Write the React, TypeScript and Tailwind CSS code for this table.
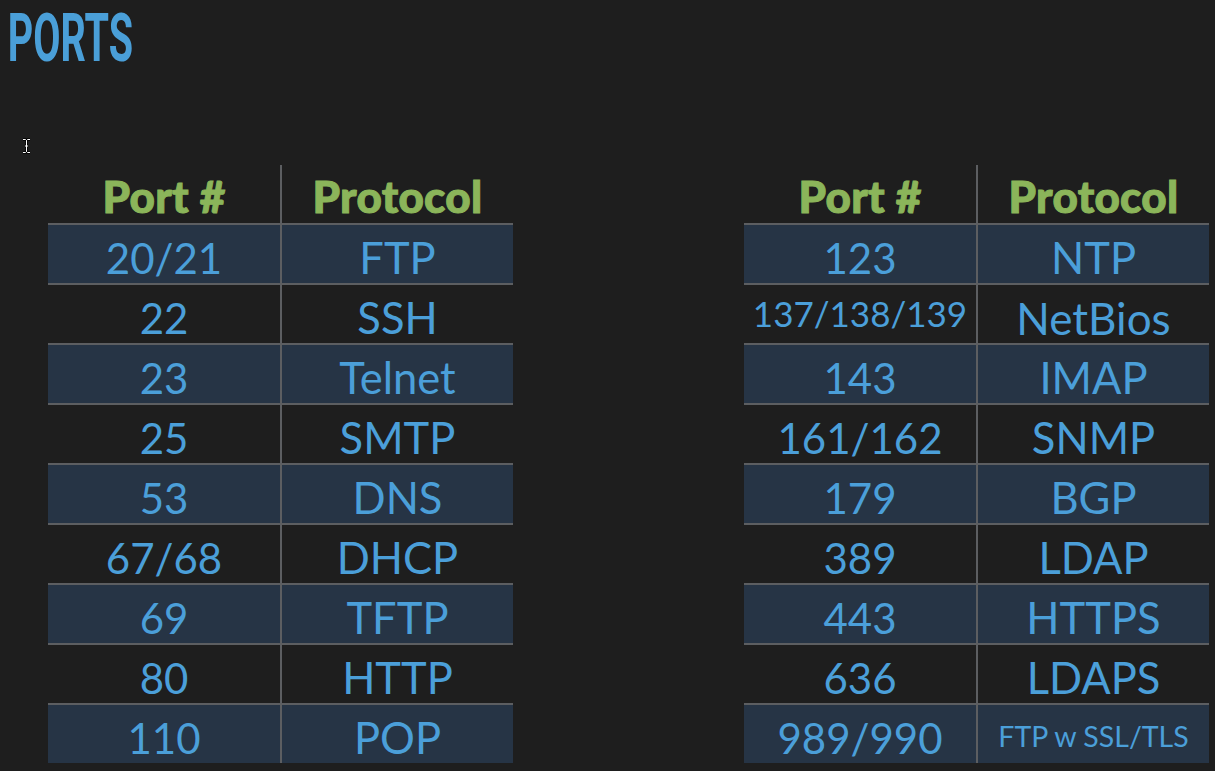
import React from "react"

const left = [
  ["20/21", "FTP"],
  ["22", "SSH"],
  ["23", "Telnet"],
  ["25", "SMTP"],
  ["53", "DNS"],
  ["67/68", "DHCP"],
  ["69", "TFTP"],
  ["80", "HTTP"],
  ["110", "POP"],
]

const right = [
  ["123", "NTP"],
  ["137/138/139", "NetBios"],
  ["143", "IMAP"],
  ["161/162", "SNMP"],
  ["179", "BGP"],
  ["389", "LDAP"],
  ["443", "HTTPS"],
  ["636", "LDAPS"],
  ["989/990", "FTP w SSL/TLS"],
]

function cellSize(text: string) {
  if (text === "137/138/139") return "text-[35px] -translate-y-[12px]"
  if (text === "FTP w SSL/TLS") return "text-[28.5px] -translate-y-[13px]"
  if (text === "NetBios") return "text-[44px] -translate-y-[3px]"
  if (/^[0-9/]+$/.test(text)) return "text-[42px] -translate-y-[4px]"
  return "text-[43.5px] -translate-y-[4px]"
}

function PortTable({ rows }: { rows: string[][] }) {
  return (
    <div className="w-[465px] shrink-0">
      <div className="grid h-[58px] grid-cols-[232px_2px_231px] font-black text-[#8bb55a] [-webkit-text-stroke:1px_#8bb55a]">
        <div className="flex items-end justify-center pb-[5px] text-[44px] leading-none tracking-[0.3px]">Port #</div>
        <div className="bg-[#5c5e61]" />
        <div className="flex items-end justify-center pb-[5px] text-[44px] leading-none tracking-[0.3px]">Protocol</div>
      </div>
      {rows.map(([port, proto], i) => (
        <div
          key={port}
          className={
            "grid h-[60px] grid-cols-[232px_2px_231px] border-t-2 border-[#5c5e61] text-[#4b9fd9] " +
            (i % 2 === 0 ? "bg-[#263445]" : "bg-[#1e1e1e]")
          }
        >
          <div className="flex items-end justify-center">
            <span className={"whitespace-nowrap leading-none " + cellSize(port)}>{port}</span>
          </div>
          <div className="bg-[#5c5e61]" />
          <div className="flex items-end justify-center">
            <span className={"whitespace-nowrap leading-none " + cellSize(proto)}>{proto}</span>
          </div>
        </div>
      ))}
    </div>
  )
}

export default function App() {
  return (
    <main className="relative h-[771px] w-[1215px] overflow-hidden bg-[#1e1e1e] font-['Lato','Liberation_Sans',sans-serif]">
      <h1 className="origin-left scale-x-[0.59] pl-[13px] pt-[5px] font-['Roboto','Liberation_Sans',sans-serif] text-[67px] leading-[67px] font-bold text-[#4a9fd8]">
        PORTS
      </h1>
      <svg className="absolute left-[22px] top-[138px]" width="9" height="16" viewBox="0 0 9 16">
        <path d="M1 1.5h2.5l1 1 1-1H8M4.5 2.5v11M1 14.5h2.5l1-1 1 1H8M3 8h3" fill="none" stroke="#000" strokeWidth="2.4" />
        <path d="M1 1.5h2.5l1 1 1-1H8M4.5 2.5v11M1 14.5h2.5l1-1 1 1H8M3 8h3" fill="none" stroke="#fff" strokeWidth="1" />
      </svg>
      <div className="mt-[93px] flex gap-[231px] pl-[48px]">
        <PortTable rows={left} />
        <PortTable rows={right} />
      </div>
    </main>
  )
}
